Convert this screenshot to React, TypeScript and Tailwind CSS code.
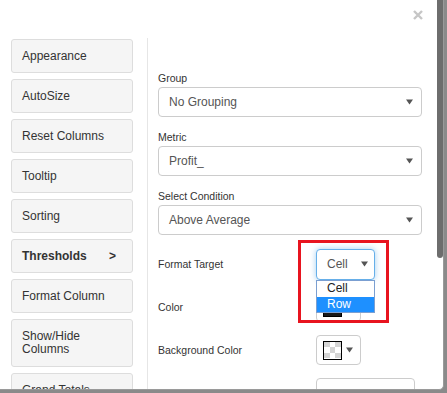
import React from "react";

const navItems = [
  "Appearance",
  "AutoSize",
  "Reset Columns",
  "Tooltip",
  "Sorting",
  "Thresholds",
  "Format Column",
  "Show/Hide Columns",
  "Grand Totals",
];

function Caret() {
  return (
    <svg width="7" height="6" viewBox="0 0 7 6" className="shrink-0">
      <path d="M0 0.5 L7 0.5 L3.5 5.5 Z" fill="#555" />
    </svg>
  );
}

function SelectBox({ value }: { value: string }) {
  return (
    <div className="flex h-[30px] w-[264px] items-center justify-between rounded-[4px] border border-[#ccc] bg-white pl-[10px] pr-[8px] text-[12px] text-[#555]">
      <span>{value}</span>
      <Caret />
    </div>
  );
}

function Field({ label, value }: { label: string; value: string }) {
  return (
    <div className="mb-[13px] flex flex-col">
      <label className="mb-[2px] text-[10.5px] leading-[14px] text-[#333]">{label}</label>
      <SelectBox value={value} />
    </div>
  );
}

function ColorButton({ swatch }: { swatch: "black" | "checker" }) {
  return (
    <div className="flex h-[30px] w-[45px] items-center gap-[4px] rounded-[4px] border border-[#ccc] bg-white pl-[6px]">
      {swatch === "black" ? (
        <div className="h-[19px] w-[19px] border border-black bg-[#1a1a1a]" />
      ) : (
        <div className="grid h-[19px] w-[19px] grid-cols-3 grid-rows-3 border border-black">
          {Array.from({ length: 9 }).map((_, i) => (
            <div key={i} className={i % 2 === 0 ? "bg-[#d4d4d4]" : "bg-white"} />
          ))}
        </div>
      )}
      <Caret />
    </div>
  );
}

function Row({ label, children }: { label: string; children: React.ReactNode }) {
  return (
    <div className="mb-[13px] flex h-[30px] items-center">
      <span className="w-[158px] pt-[2px] text-[10.5px] text-[#333]">{label}</span>
      {children}
    </div>
  );
}

export default function App() {
  return (
    <div className="relative h-[393px] w-[447px] overflow-hidden bg-[#8a8a8a] font-['Liberation_Sans',Arial,sans-serif]">
      <div className="flex h-[390px] w-[444px] overflow-hidden rounded-br-[5px] border-b border-r border-[#9a9a9a] bg-white">
        <div className="flex flex-1 flex-col overflow-hidden">
          <div className="flex h-[38px] shrink-0 justify-end pr-[14px] pt-[10px]">
            <svg width="10" height="10" viewBox="0 0 10 10">
              <path d="M1 1 L9 9 M9 1 L1 9" stroke="#c6c6c6" strokeWidth="2.4" />
            </svg>
          </div>
          <div className="flex flex-1 overflow-hidden">
            <div className="flex w-[147px] shrink-0 flex-col gap-[6px] pl-[11px] pr-[14px] pt-[1px]">
              {navItems.map((item) => {
                const active = item === "Thresholds";
                const tall = item === "Show/Hide Columns";
                return (
                  <div
                    key={item}
                    className={`flex shrink-0 items-center justify-between rounded-[3px] border border-[#ddd] bg-[#f5f5f5] pl-[10px] pr-[16px] text-[12px] leading-[13px] text-[#333] ${
                      tall ? "h-[48px]" : "h-[34px]"
                    } ${active ? "font-bold" : ""}`}
                  >
                    <span className={tall ? "w-[70px]" : ""}>{item}</span>
                    {active && <span>&gt;</span>}
                  </div>
                );
              })}
            </div>
            <div className="w-px shrink-0 bg-[#e6e6e6]" />
            <div className="relative flex-1 pl-[10px] pt-[33px]">
              <Field label="Group" value="No Grouping" />
              <Field label="Metric" value="Profit_" />
              <Field label="Select Condition" value="Above Average" />
              <div className="h-px" />
              <Row label="Format Target">
                <div className="flex h-[31px] w-[59px] items-center justify-between rounded-[4px] border border-[#66afe9] bg-white pl-[10px] pr-[6px] text-[12px] text-[#555] shadow-[0_0_6px_rgba(102,175,233,0.6)]">
                  <span>Cell</span>
                  <Caret />
                </div>
              </Row>
              <Row label="Color">
                <ColorButton swatch="black" />
              </Row>
              <Row label="Background Color">
                <ColorButton swatch="checker" />
              </Row>
              <div className="flex h-[30px]">
                <div className="ml-[158px] h-[30px] w-[99px] rounded-[4px] border border-[#ccc]" />
              </div>

              <div className="absolute left-[168px] top-[242px] flex w-[59px] flex-col border border-[#7b9fd1] bg-white text-[12px] leading-[15px]">
                <div className="h-[16px] pl-[10px] text-[#222]">Cell</div>
                <div className="h-[15px] bg-[#1e90ff] pl-[10px] text-white">Row</div>
              </div>
              <div className="pointer-events-none absolute left-[150px] top-[202px] h-[83px] w-[91px] border-[3px] border-[#e8141f]" />
            </div>
          </div>
        </div>
        <div className="flex w-[6px] shrink-0 flex-col">
          <div className="h-[258px] rounded-b-[3px] bg-[#6d6d6d]" />
        </div>
      </div>
    </div>
  );
}
